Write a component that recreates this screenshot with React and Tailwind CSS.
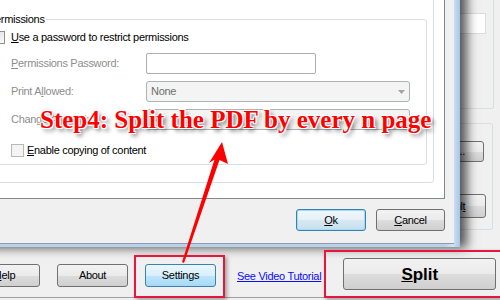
const btn =
  "flex items-center justify-center rounded-[3px] border border-[#707070] bg-[linear-gradient(#f2f2f2,#ebebeb_50%,#dddddd_50%,#cfcfcf)] text-black";
const btnBlue =
  "flex items-center justify-center rounded-[3px] border border-[#3c7fb1] bg-[linear-gradient(#eaf6fd,#d9f0fc_50%,#bee6fd_50%,#a7d9f5)] text-black";
const btnDefault =
  "flex items-center justify-center rounded-[3px] border border-[#3c7fb1] bg-[linear-gradient(#f1f7fb,#e6f0f7_50%,#d6e8f3_50%,#c9dfee)] text-black shadow-[inset_0_0_0_1px_#9fdcf5]";

function Checkbox({ disabled }) {
  return (
    <div
      className={
        "w-[13px] h-[13px] shrink-0 border " +
        (disabled
          ? "border-[#b8b8b8] bg-[#f4f4f4]"
          : "border-[#8e8f8f] bg-[linear-gradient(135deg,#dcdcdc,#fbfbfb)]")
      }
    />
  );
}

function Select({ value }) {
  return (
    <div className="w-[264px] h-[21px] flex items-center justify-between pl-[4px] pr-[4px] rounded-[3px] border border-[#adb2b5] bg-[#f4f4f4] text-[#6d6d6d]">
      <span>{value}</span>
      <svg width="7" height="4" viewBox="0 0 7 4">
        <path d="M0 0 L7 0 L3.5 4 Z" fill="#a3a3a3" />
      </svg>
    </div>
  );
}

export default function App() {
  return (
    <div className="relative w-[500px] h-[300px] overflow-hidden bg-[#f0f0f0] font-['Liberation_Sans',Arial,sans-serif] text-[11px] leading-[13px] tracking-[-0.3px] text-black">
      {/* main window behind the dialog */}
      <div className="flex flex-col h-full">
        <div className="flex h-[244px]">
          <div className="flex-1" />
          <div className="w-[62px] pr-[6px] flex flex-col">
            <div className="h-[109px] border-r border-b border-[#d5dfe5] rounded-br-[3px] pt-[13px] pr-[7px]">
              <div className="h-[21px] border border-[#dcdcdc] bg-white" />
            </div>
            <div className="mt-[14px] mr-[1px] h-[107px] border-t border-r border-b border-[#d5dfe5] rounded-r-[3px] pt-[17px] pr-[8px] flex flex-col">
              <div className={btn + " h-[21px] w-[46px] self-end"}>...</div>
              <div className={btn + " h-[24px] w-[74px] self-end mt-[32px] mr-[-2px]"}>
                <span>
                  Defaul<u>t</u>
                </span>
              </div>
            </div>
          </div>
        </div>
        <div className="flex h-[53px] items-start ml-[-31px]">
          <div className={btn + " w-[71px] h-[23px] mt-[20px]"}>
            <span>
              <u>H</u>elp
            </span>
          </div>
          <div className={btn + " w-[71px] h-[23px] mt-[20px] ml-[17px]"}>About</div>
          <div className={btnBlue + " w-[71px] h-[23px] mt-[20px] ml-[17px]"}>Settings</div>
          <a className="mt-[26px] ml-[21px] text-[#0a0aff] underline whitespace-nowrap">
            See Video Tutorial
          </a>
          <div className={btn + " w-[153px] h-[32px] mt-[14px] ml-[22px] text-[17px] font-bold tracking-normal"}>
            <span>
              <u>S</u>plit
            </span>
          </div>
        </div>
        <div className="flex-1 border-t border-[#a0a0a0]" />
      </div>

      {/* the settings dialog */}
      <div className="absolute left-[-30px] top-[-12px] w-[490px] h-[259px] pr-[6px] pb-[3px] bg-[linear-gradient(90deg,#b9d1ea,#b9d1ea_97%,#cfe3f7_98.5%,#aac6e4)] shadow-[7px_1px_10px_rgba(0,0,0,0.65)] z-10">
        <div className="h-full flex flex-col bg-[#f0f0f0] border-b border-[#8d9cb0]">
          <div className="h-[211px] mr-[9px] bg-white border-r border-b border-[#828790] pt-[4px] pr-[10px] pb-[15px] pl-[4px]">
            <div className="h-full border border-[#d5dfe5] rounded-[3px] pr-[6px] pb-[17px] pl-[3px] flex flex-col">
              <fieldset className="mt-[20px] flex-1 border border-[#d5dfe5] rounded-[3px] p-0">
                <legend className="ml-[8px] px-[1px] leading-[13px]">Permissions</legend>
                <div className="pt-[5px] pb-[7px]">
                  <div className="flex items-center h-[13px] ml-[13px]">
                    <Checkbox />
                    <span className="ml-[6px]">
                      <u>U</u>se a password to restrict permissions
                    </span>
                  </div>
                  <div className="flex items-center h-[21px] mt-[9px] ml-[32px] text-[#8e8e8e]">
                    <span className="w-[135px]">
                      <u>P</u>ermissions Password:
                    </span>
                    <div className="w-[170px] h-[21px] rounded-[2px] border border-[#abadb3] bg-white" />
                  </div>
                  <div className="flex items-center h-[21px] mt-[7px] ml-[32px] text-[#8e8e8e]">
                    <span className="w-[135px]">
                      Print A<u>l</u>lowed:
                    </span>
                    <Select value="None" />
                  </div>
                  <div className="flex items-center h-[21px] mt-[7px] ml-[32px] text-[#8e8e8e]">
                    <span className="w-[135px]">Change Allowed:</span>
                    <Select value="All" />
                  </div>
                  <div className="flex items-center h-[13px] mt-[14px] ml-[32px]">
                    <Checkbox disabled />
                    <span className="ml-[3px]">
                      <u>E</u>nable copying of content
                    </span>
                  </div>
                </div>
              </fieldset>
            </div>
          </div>
          <div className="flex justify-end gap-[10px] pt-[10px] pr-[9px]">
            <div className={btnDefault + " w-[70px] h-[22px]"}>
              <span>
                <u>O</u>k
              </span>
            </div>
            <div className={btn + " w-[69px] h-[22px]"}>
              <span>
                <u>C</u>ancel
              </span>
            </div>
          </div>
        </div>
      </div>

      {/* annotations */}
      <div className="absolute left-[40px] top-[107px] z-20 whitespace-nowrap font-['Liberation_Serif',serif] font-bold text-[25px] leading-[25px] tracking-normal text-[#ff0000] [text-shadow:-1px_-1px_0_#fff,1px_-1px_0_#fff,-1px_1px_0_#fff,1px_1px_0_#fff,0_0_2px_#fff,3px_3px_4px_rgba(0,0,0,0.55)]">
        Step4: Split the PDF by every n page
      </div>
      <div className="absolute left-[134px] top-[255px] w-[91px] h-[43px] border-2 border-[#e5173f] shadow-[2px_2px_4px_rgba(0,0,0,0.35)] z-20" />
      <div className="absolute left-[324px] top-[250px] w-[180px] h-[48px] border-2 border-[#e5173f] shadow-[2px_2px_4px_rgba(0,0,0,0.35)] z-20" />
      <svg className="absolute left-0 top-0 z-30 pointer-events-none" width="500" height="300" viewBox="0 0 500 300">
        <polygon
          points="222,142 228,164 219.5,160 184,263 182,262 214.5,159.5 209,163"
          fill="#ff0000"
        />
      </svg>
    </div>
  );
}
